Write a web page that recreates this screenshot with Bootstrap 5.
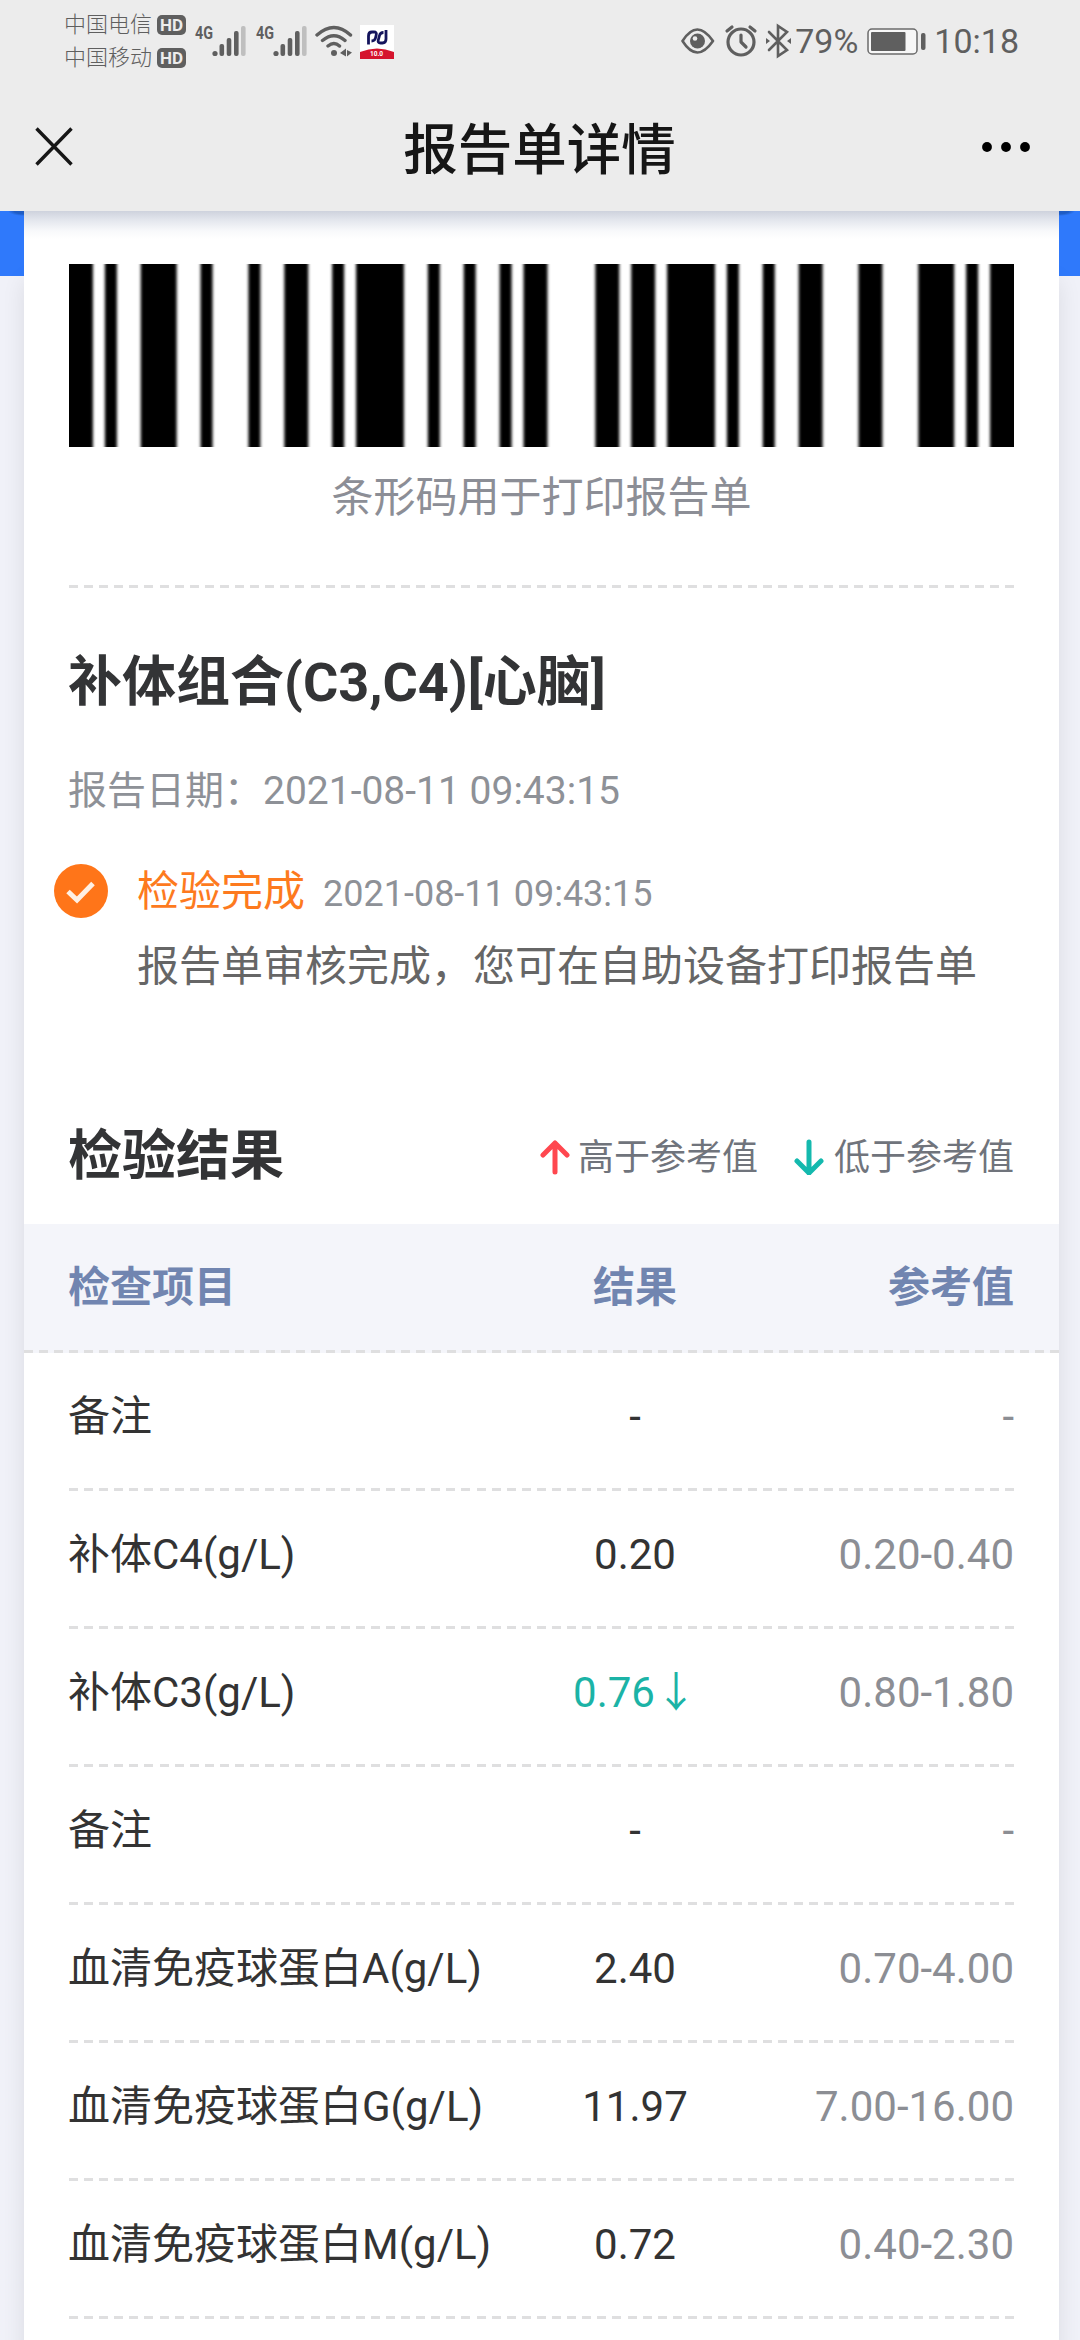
<!DOCTYPE html>
<html lang="zh-CN">
<head>
<meta charset="utf-8">
<meta name="viewport" content="width=device-width, initial-scale=1">
<title>报告单详情</title>
<link href="https://cdn.jsdelivr.net/npm/bootstrap@5.3.0/dist/css/bootstrap.min.css" rel="stylesheet">
<script src="https://cdn.jsdelivr.net/npm/bootstrap@5.3.0/dist/js/bootstrap.bundle.min.js"></script>
<style>
  body { font-family: Roboto, "Noto Sans CJK SC", sans-serif; background: #f0f1f8; color: #333; height: 2340px; overflow: hidden; font-size: 42px; line-height: 1; }
  svg { display: block; flex: none; }
  .top-area { background: #ececec; height: 211px; position: relative; z-index: 1; }
  .status-row { height: 82px; color: #5f5f5f; padding-left: 64px; padding-right: 61px; }
  .carrier { font-size: 22px; line-height: 33px; height: 33px; font-weight: 300; }
  .hd-tag { width: 29px; height: 20px; border-radius: 5px; background: #5f5f5f; color: #ececec; font-size: 17px; font-weight: 700; line-height: 20px; margin-left: 5px; }
  .signal-icons { margin-left: 4px; }
  .status-num { font-size: 34px; }
  .battery { margin-left: 8px; }
  .nav-row { height: 129px; padding: 0 49px 0 35px; color: #161616; }
  .nav-title { font-size: 54.5px; font-weight: 500; line-height: 80px; margin: 7px 0 0 25px; }
  .page-body { height: 2129px; background: radial-gradient(ellipse 16px 5px at 24px 0, #1f5cc4 60%, transparent) , radial-gradient(ellipse 16px 5px at 1059px 0, #1f5cc4 60%, transparent), linear-gradient(#2f79fb 65px, transparent 65px); padding: 0 21px 0 24px; }
  .report { height: 2129px; background: linear-gradient(#ced2dd, #e3e6ed 9px, #f8f9fb 20px, #fff 28px); padding-top: 53px; }
  .page-body > .report { box-shadow: 0 70px 22px rgba(0,0,0,.09); }
  .inset { margin: 0 45px; }
  .code-note { color: #8c8e96; height: 141px; padding-top: 26px; line-height: 50px; }
  .dash { position: relative; }
  .dash::after { content: ""; display: block; position: absolute; left: 0; right: 0; bottom: 0; height: 3px; background: repeating-linear-gradient(90deg, #dfdfe0 0 9px, transparent 9px 15.095px); }
  .report-name { font-size: 54px; font-weight: 700; line-height: 70px; margin: 60px 0 0 -1px; color: #333436; }
  .report-date { font-size: 39px; line-height: 50px; margin: 48px 0 0 -1px; color: #8e9197; }
  .step { margin: 48px 0 0 30px; }
  .step-text { padding-left: 29px; }
  .step-title { color: #fd7a1e; line-height: 56px; }
  .step-time { font-size: 36px; color: #8e9197; margin-left: 18px; padding-top: 4px; }
  .step-desc { color: #666; line-height: 56px; margin-top: 19px; }
  .result-head { height: 229px; padding-top: 127px; }
  .result-title { font-size: 54px; font-weight: 700; line-height: 70px; color: #333436; margin-left: -1px; }
  .legend-note { font-size: 36px; color: #70747c; line-height: 50px; height: 72px; }
  .legend-note svg { margin-bottom: 2px; }
  .legend-low { margin-left: 18px; }
  .head-band { height: 129px; background: #f4f5fa; color: #7185b0; font-weight: 700; padding: 0 45px; }
  .cell-a { width: 432px; padding-right: 1px; margin-left: -1px; }
  .cell-b { width: 270px; }
  .cell-c { width: 244px; }
  .line-item { height: 138px; }
  .line-item > div { line-height: 54px; height: 54px; margin-bottom: 11px; }
  .head-band > div { line-height: 54px; margin-bottom: 2px; }
  .ref-val { color: #8c8e94; }
  .low { color: #1bb3a6; }
  .low span { font-family: "Noto Sans CJK SC", sans-serif; line-height: 1; }
</style>
</head>
<body>
<header class="top-area">
  <div class="status-row d-flex align-items-center justify-content-between">
    <div class="d-flex align-items-center">
      <div>
        <div class="carrier d-flex align-items-center">中国电信<span class="hd-tag text-center">HD</span></div>
        <div class="carrier d-flex align-items-center">中国移动<span class="hd-tag text-center">HD</span></div>
      </div>
      <svg class="signal-icons" width="210" height="44" viewBox="190 18 210 44">
        <g fill="#5f5f5f">
          <g font-family="Roboto" font-weight="700" font-size="18"><text x="195" y="38" textLength="18" lengthAdjust="spacingAndGlyphs">4G</text><text x="256" y="38" textLength="18" lengthAdjust="spacingAndGlyphs">4G</text></g>
          <g id="bars"><circle cx="215" cy="52.500" r="2.600"/><rect x="219.500" y="43" width="4.600" height="12" rx="2"/><rect x="226.700" y="37" width="4.600" height="18" rx="2"/><rect x="234" y="30" width="4.600" height="25" rx="2"/><rect x="241" y="25" width="4.600" height="30" rx="2" fill="#bfbfbf"/></g>
          <use href="#bars" x="61"/>
          <circle cx="334" cy="52" r="3"/>
          <path d="M340 52l6-4.500v8zM347 49l5 2.500-5 4z"/>
        </g>
        <g fill="none" stroke="#5f5f5f" stroke-width="3.400" stroke-linecap="round"><path d="M317 34Q334 19 350.500 34M322.500 39.500Q334 30 345 39.500M328 45Q334 40 339.500 45"/></g>
        <rect x="360" y="24" width="34" height="34" fill="#fff"/>
        <path d="M360 51Q377 44 394 51V58H360Z" fill="#d5142d"/>
        <path d="M368.500 43.500V35Q368.500 31 372 31H374Q377 31 376.200 34L375.500 37Q374.800 40 371.500 40M386 29V38Q386 42 382.500 42H380.500Q377.500 42 378.300 39L379.500 34.500Q380.300 31.500 383.500 31.500" fill="none" stroke="#14145c" stroke-width="2.800"/>
        <text x="370" y="55" font-family="Roboto" font-size="6.500" font-weight="700" fill="#fff">10.0</text>
      </svg>
    </div>
    <div class="d-flex align-items-center">
      <svg width="114" height="44" viewBox="681 18 114 44">
        <g fill="none" stroke="#5f5f5f" stroke-width="2.600" stroke-linecap="round" stroke-linejoin="round">
          <path d="M682.500 40Q697 17 713 40Q697 63 682.500 40Z"/>
          <circle cx="741" cy="41" r="13" stroke-width="3.200"/><path d="M741 34V41L746 46" stroke-width="3.200"/>
          <path d="M727 30L732 26M755 30L750 26" stroke-width="3.200"/>
          <path d="M769 31L787 49L778 55V25L787 31L769 49" stroke-linejoin="miter"/>
        </g>
        <circle cx="697.500" cy="40" r="7.500" fill="#5f5f5f"/><circle cx="695" cy="37.500" r="2.300" fill="#ececec"/>
        <path d="M766 37l4 3-4 3zM791 37l-4 3 4 3z" fill="#5f5f5f"/>
      </svg>
      <span class="status-num">79%</span>
      <svg class="battery" width="60" height="30" viewBox="866 25 60 30">
        <rect x="868" y="28" width="49" height="25" rx="4" fill="#f7f7f7" stroke="#6b6b6b" stroke-width="1.500"/>
        <rect x="871" y="31" width="34.500" height="19" rx="1" fill="#5f5f5f"/><rect x="921" y="32" width="4.500" height="17" rx="2" fill="#5f5f5f"/>
      </svg>
      <span class="status-num ms-2">10:18</span>
    </div>
  </div>
  <nav class="nav-row d-flex align-items-center justify-content-between">
    <svg width="38" height="40" viewBox="0 0 38 40"><path d="M1.500 1.500L36.500 37.500M36.500 1.500L1.500 37.500" stroke="#161616" stroke-width="3.400"/></svg>
    <div class="nav-title">报告单详情</div>
    <svg width="50" height="12" viewBox="0 0 50 12"><circle cx="6" cy="6" r="4.900"/><circle cx="25" cy="6" r="4.900"/><circle cx="44" cy="6" r="4.900"/></svg>
  </nav>
</header>
<main class="page-body">
  <section class="report">
    <div class="inset">
      <svg width="945" height="183" viewBox="0 0 79 183" preserveAspectRatio="none">
        <defs><filter id="soft" x="-10%" y="-20%" width="120%" height="140%" color-interpolation-filters="sRGB"><feGaussianBlur stdDeviation="0.13 0"/></filter></defs>
        <path filter="url(#soft)" fill="#000" d="M-2 0H2V183H-2zM3 0h1v183h-1zM6 0h3v183h-3zM11 0h1v183h-1zM15 0h1v183h-1zM18 0h2v183h-2zM22 0h1v183h-1zM24 0h4v183h-4zM30 0h1v183h-1zM33 0h1v183h-1zM36 0h1v183h-1zM38 0h2v183h-2zM44 0h2v183h-2zM47 0h2v183h-2zM50 0h4v183h-4zM55 0h1v183h-1zM58 0h1v183h-1zM61 0h2v183h-2zM66 0h2v183h-2zM71 0h3v183h-3zM75 0h1v183h-1zM77 0h4v183h-4z"/>
      </svg>
      <div class="code-note text-center dash">条形码用于打印报告单</div>
      <h1 class="report-name">补体组合(C3,C4)[心脑]</h1>
      <div class="report-date">报告日期：2021-08-11 09:43:15</div>
    </div>
    <div class="step d-flex">
      <svg width="54" height="54" viewBox="0 0 54 54"><circle cx="27" cy="27" r="27" fill="#ff7519"/><path d="M14 27.500L23 36L39 19.500" fill="none" stroke="#fff0e4" stroke-width="5"/></svg>
      <div class="step-text">
        <div class="d-flex align-items-center"><span class="step-title">检验完成</span><span class="step-time">2021-08-11 09:43:15</span></div>
        <div class="step-desc">报告单审核完成，您可在自助设备打印报告单</div>
      </div>
    </div>
    <div class="inset result-head d-flex justify-content-between">
      <h2 class="result-title mb-0">检验结果</h2>
      <div class="d-flex align-items-center legend-note">
        <svg width="30" height="36" viewBox="0 0 30 36"><path d="M15 33V4M3 16L15 4L27 16" fill="none" stroke="#ff474f" stroke-width="5" stroke-linecap="round" stroke-linejoin="round"/></svg>
        <span class="ms-2">高于参考值</span>
        <svg class="legend-low" width="50" height="36" viewBox="-18 0 50 36"><path d="M15 3V34M3 22L15 34L27 22" fill="none" stroke="#14b9ae" stroke-width="5" stroke-linecap="round" stroke-linejoin="round"/></svg>
        <span class="ms-2">低于参考值</span>
      </div>
    </div>
    <div class="head-band dash d-flex align-items-center"><div class="cell-a">检查项目</div><div class="cell-b text-center">结果</div><div class="cell-c text-end">参考值</div></div>
    <div class="inset">
      <div class="line-item dash d-flex align-items-center"><div class="cell-a">备注</div><div class="cell-b text-center">-</div><div class="cell-c text-end ref-val">-</div></div>
      <div class="line-item dash d-flex align-items-center"><div class="cell-a">补体C4(g/L)</div><div class="cell-b text-center">0.20</div><div class="cell-c text-end ref-val">0.20-0.40</div></div>
      <div class="line-item dash d-flex align-items-center"><div class="cell-a">补体C3(g/L)</div><div class="cell-b text-center low">0.76<span>↓</span></div><div class="cell-c text-end ref-val">0.80-1.80</div></div>
      <div class="line-item dash d-flex align-items-center"><div class="cell-a">备注</div><div class="cell-b text-center">-</div><div class="cell-c text-end ref-val">-</div></div>
      <div class="line-item dash d-flex align-items-center"><div class="cell-a">血清免疫球蛋白A(g/L)</div><div class="cell-b text-center">2.40</div><div class="cell-c text-end ref-val">0.70-4.00</div></div>
      <div class="line-item dash d-flex align-items-center"><div class="cell-a">血清免疫球蛋白G(g/L)</div><div class="cell-b text-center">11.97</div><div class="cell-c text-end ref-val">7.00-16.00</div></div>
      <div class="line-item dash d-flex align-items-center"><div class="cell-a">血清免疫球蛋白M(g/L)</div><div class="cell-b text-center">0.72</div><div class="cell-c text-end ref-val">0.40-2.30</div></div>
    </div>
  </section>
</main>
</body>
</html>
